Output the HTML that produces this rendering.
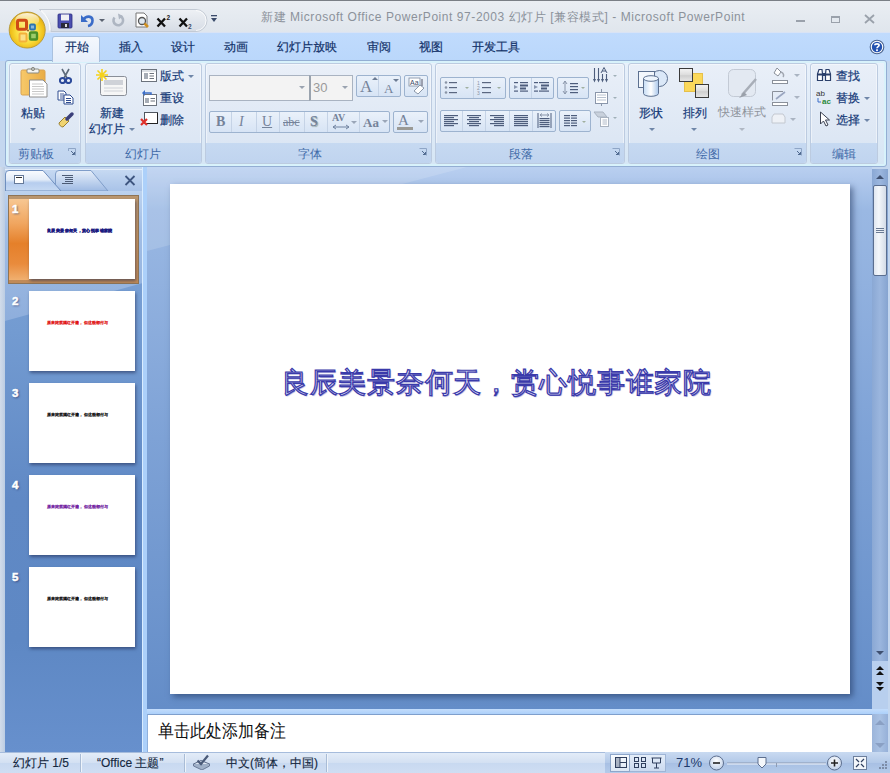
<!DOCTYPE html>
<html><head><meta charset="utf-8">
<style>
*{margin:0;padding:0;box-sizing:border-box}
html,body{width:890px;height:773px;overflow:hidden;background:#c4d7ef}
body{position:relative;font-family:"Liberation Sans",sans-serif;font-size:12px;color:#15428b}
.a{position:absolute}
.t{position:absolute;white-space:nowrap;line-height:1}
/* title bar */
#title{left:0;top:0;width:890px;height:32px;background:linear-gradient(#eaeef3,#e0e6ed);border-top:1px solid #7a7f86}
#tabs{left:0;top:32px;width:890px;height:29px;border-top:1px solid #d9e3f5;background:linear-gradient(#c0dbfd,#bad7fb)}
#ribbon{left:5px;top:60px;width:882px;height:107px;border:1px solid #93aed3;border-radius:3px;box-shadow:inset 0 0 0 2px #d8f2fb;background:linear-gradient(#e8f1fb,#dde9f6 70%,#d5e6f5)}
.grp{position:absolute;top:63px;height:101px;border:1px solid #bccbe0;border-radius:3px;box-shadow:inset 0 0 0 1px rgba(255,255,255,.45);background:linear-gradient(#e9eff8,#dde7f4 75%,#d6e3f4)}
.grp .lab{position:absolute;left:0;right:0;bottom:0;height:20px;background:linear-gradient(#c6d9f1,#c0d4ef);text-align:center;line-height:20px;color:#3e6aaa;border-radius:0 0 2px 2px}
.btnbox{position:absolute;border:1px solid #9db3cf;border-radius:2px;background:linear-gradient(#eaf1fa,#d7e4f5)}
.dd{position:absolute;width:0;height:0;border-left:3px solid transparent;border-right:3px solid transparent;border-top:3px solid #6f86a8}
#left{left:0;top:167px;width:143px;height:586px;background:linear-gradient(170deg,#a9c4e8 0%,#7ea3d7 12%,#6893cf 40%,#5f8ac8 100%)}
#split{left:142px;top:167px;width:5px;height:586px;background:linear-gradient(90deg,#d9ecff 0,#d9ecff 1px,#acd0fa 1px)}
#stage{left:147px;top:167px;width:725px;height:542px;background:linear-gradient(#b9cff0,#9ab8e3 8%,#7ea2d6 50%,#648dc8)}
#slide{left:170px;top:184px;width:680px;height:510px;background:#fff;box-shadow:3px 3px 6px rgba(30,50,90,.55)}
#notes{left:147px;top:714px;width:725px;height:39px;background:#fff;border-top:1px solid #7f9fcc;border-left:1px solid #8fb0dc}
#status{left:0;top:752px;width:890px;height:21px;border-top:1px solid #a6bcdc;background:linear-gradient(#e3ecf8,#d3e0f2 50%,#c8d9f0 51%,#cfdef3)}
.tab{font-size:12px;color:#14336a;-webkit-text-stroke:0.2px #14336a}
.rb{font-size:12px;color:#163a78;margin-top:1px;-webkit-text-stroke:0.2px #163a78}
.lab2{font-size:12px;color:#3f6aa8;margin-top:1px;margin-left:-1px}
.ser{font-family:"Liberation Serif",serif;color:#75839a}
.sep{top:112px;width:1px;height:20px;background:#c5d3e6}
.sep2{top:111px;width:1px;height:20px;background:#c5d3e6}
.thumb{left:29px;width:106px;height:80px;background:#fff;box-shadow:1px 2px 3px rgba(30,40,80,.55)}
.num{left:11px;font-size:11.5px;font-weight:bold;color:#fff;-webkit-text-stroke:0.5px #fff;text-shadow:1px 1px 2px rgba(30,40,90,.7);margin-left:1px;margin-top:1px}
.st{font-size:12px;color:#15283f;-webkit-text-stroke:0.15px #15283f}
.stsep{top:754px;width:1px;height:18px;background:#a9bcd6;box-shadow:1px 0 0 #eef4fb}
.thtx{left:47px;font-size:4.4px;letter-spacing:0.38px;-webkit-text-stroke:0.35px currentColor}
</style></head><body>
<div id="title" class="a"></div>
<div id="tabs" class="a"></div>
<div id="ribbon" class="a"></div>
<!-- TITLE -->
<div class="t" id="ttl" style="left:261px;top:11px;font-size:12px;letter-spacing:0.56px;color:#8c929b">新建 Microsoft Office PowerPoint 97-2003 幻灯片 [兼容模式] - Microsoft PowerPoint</div>
<!-- office button -->
<svg class="a" style="left:7px;top:10px" width="40" height="40" viewBox="0 0 40 40">
<defs><radialGradient id="ob" cx=".5" cy=".55" r=".55"><stop offset="0" stop-color="#fff3a0"/><stop offset=".55" stop-color="#f9dc3c"/><stop offset=".85" stop-color="#efbd18"/><stop offset="1" stop-color="#d9a418"/></radialGradient>
<linearGradient id="obh" x1="0" y1="0" x2="0" y2="1"><stop offset="0" stop-color="#fff" stop-opacity=".85"/><stop offset="1" stop-color="#fff" stop-opacity="0"/></linearGradient></defs>
<circle cx="20.2" cy="20" r="18" fill="url(#ob)" stroke="#b99c3c" stroke-width="1"/>
<ellipse cx="20.2" cy="10" rx="12" ry="7" fill="url(#obh)"/>
<rect x="10.5" y="10.3" width="9" height="9" rx="1.5" fill="none" stroke="#cf4a16" stroke-width="3"/>
<rect x="23" y="14.5" width="5" height="5" rx="1" fill="#8ab8d8" stroke="#2b74b0" stroke-width="1.8"/>
<rect x="23" y="22.5" width="7" height="7" rx="1" fill="#9ccc6a" stroke="#4a9028" stroke-width="2.4"/>
<rect x="12.5" y="23.5" width="7" height="8" rx="1" fill="#fbe088" stroke="#f3b13a" stroke-width="2"/>
<circle cx="21" cy="20.5" r="1" fill="#8a5a20"/>
</svg>
<!-- QAT -->
<svg class="a" style="left:0;top:0" width="220" height="34" viewBox="0 0 220 34"><defs><linearGradient id="qat" x1="0" y1="0" x2="0" y2="1"><stop offset="0" stop-color="#eef1f5"/><stop offset="1" stop-color="#d6dce5"/></linearGradient></defs>
<path d="M39.5 9.5 H196 A11 11 0 0 1 196 31.5 H51 A24 24 0 0 0 39.5 9.5z" fill="url(#qat)" stroke="#c3cad4" stroke-width="1"/>
<path d="M41 10.5 A24 24 0 0 1 50 30.5" fill="none" stroke="#ffffff" stroke-width="1.5" opacity=".9"/>
<path d="M196 10.5 A10 10 0 0 1 196 30.5" fill="none" stroke="#ffffff" stroke-width="1" opacity=".8"/></svg>
<svg class="a" style="left:57px;top:13px" width="16" height="16" viewBox="0 0 16 16"><rect x="1" y="1" width="14" height="14" rx="1" fill="#4b4fb0" stroke="#2c2f80" stroke-width=".8"/><rect x="4" y="1.5" width="8" height="6" fill="#f0f0f4"/><rect x="4" y="10" width="8" height="5" fill="#2a2a3a"/><rect x="8" y="11" width="2" height="3" fill="#ddd"/></svg>
<svg class="a" style="left:80px;top:13px" width="15" height="15" viewBox="0 0 15 15"><path d="M1 2 L1 9 L8 9z" fill="#3a6cc8"/><path d="M3.5 6.5 C6 2.5,12.5 2.5,12.5 7.5 C12.5 10.5,10.5 12.5,8 13" fill="none" stroke="#3a6cc8" stroke-width="2.6"/></svg>
<div class="dd" style="left:99px;top:19px;border-top-color:#5a6270"></div>
<svg class="a" style="left:111px;top:13px" width="14" height="14" viewBox="0 0 14 14"><path d="M9.5 3.2 A4.8 4.8 0 1 1 3.5 4.5" fill="none" stroke="#aeb6c2" stroke-width="2.6"/><path d="M7 0.5 L12 3 L8 6.5z" fill="#aeb6c2"/></svg>
<svg class="a" style="left:134px;top:12px" width="16" height="17" viewBox="0 0 16 17"><path d="M2 1 H10 L13 4 V15 H2z" fill="#fff" stroke="#777" stroke-width="1"/><circle cx="8" cy="9" r="3.5" fill="#dfe8f0" stroke="#555" stroke-width="1.3"/><path d="M10.5 11.5 L14 15" stroke="#d09020" stroke-width="2.5"/></svg>
<svg class="a" style="left:156px;top:14px" width="16" height="14" viewBox="0 0 16 14"><path d="M1.5 4.5 L9 12.5 M9 4.5 L1.5 12.5" stroke="#111" stroke-width="2.3"/><text x="10.5" y="6" font-size="6.5" font-weight="bold" font-family="Liberation Sans" fill="#222">2</text></svg>
<svg class="a" style="left:178px;top:14px" width="16" height="16" viewBox="0 0 16 16"><path d="M1.5 4.5 L9 12.5 M9 4.5 L1.5 12.5" stroke="#111" stroke-width="2.3"/><text x="10" y="15" font-size="6.5" font-weight="bold" font-family="Liberation Sans" fill="#3a4a6a">2</text></svg>
<svg class="a" style="left:210px;top:14px" width="8" height="9" viewBox="0 0 8 9"><rect x="1" y="1" width="6" height="1.3" fill="#3a4a6a"/><path d="M1 4 H7 L4 8z" fill="#3a4a6a"/></svg>
<!-- window buttons -->
<div class="a" style="left:796px;top:20px;width:9px;height:2px;background:#9aa1ab"></div>
<div class="a" style="left:831px;top:16px;width:9px;height:7px;border:1px solid #9aa1ab;border-top-width:2px"></div>
<svg class="a" style="left:864px;top:14px" width="11" height="10" viewBox="0 0 11 10"><path d="M1 1 L10 9 M10 1 L1 9" stroke="#9aa1ab" stroke-width="1.8"/></svg>
<!-- TABS -->
<div class="a" style="left:52px;top:36px;width:48px;height:26px;border:1px solid #a9c1df;border-bottom:none;border-radius:3px 3px 0 0;background:linear-gradient(#f4f8fd,#e6eefa)"></div>
<div class="t tab" style="left:65px;top:41px">开始</div>
<div class="t tab" style="left:119px;top:41px">插入</div>
<div class="t tab" style="left:171px;top:41px">设计</div>
<div class="t tab" style="left:224px;top:41px">动画</div>
<div class="t tab" style="left:277px;top:41px">幻灯片放映</div>
<div class="t tab" style="left:367px;top:41px">审阅</div>
<div class="t tab" style="left:419px;top:41px">视图</div>
<div class="t tab" style="left:472px;top:41px">开发工具</div>
<svg class="a" style="left:869px;top:39px" width="16" height="16" viewBox="0 0 16 16"><circle cx="8" cy="8" r="6.8" fill="#fff" stroke="#4a6490" stroke-width="1.1"/><circle cx="8" cy="8" r="5.2" fill="#2352b0"/><path d="M5.9 6.2 C5.9 4.3,10.1 4.3,10.1 6.2 C10.1 7.6,8 7.6,8 9.3" fill="none" stroke="#fff" stroke-width="1.7"/><rect x="7.1" y="10.3" width="1.8" height="1.8" fill="#fff"/></svg>


<div class="grp" style="left:9px;width:72px"><div class="lab"></div></div>
<div class="grp" style="left:85px;width:117px"><div class="lab"></div></div>
<div class="grp" style="left:205px;width:227px"><div class="lab"></div></div>
<div class="grp" style="left:435px;width:190px"><div class="lab"></div></div>
<div class="grp" style="left:628px;width:179px"><div class="lab"></div></div>
<div class="grp" style="left:810px;width:68px"><div class="lab"></div></div>


<!-- CLIPBOARD -->
<svg class="a" style="left:20px;top:67px" width="28" height="31" viewBox="0 0 28 31">
<defs><linearGradient id="cb" x1="0" x2="1"><stop offset="0" stop-color="#f7c96a"/><stop offset="1" stop-color="#e9ac45"/></linearGradient></defs>
<rect x="1" y="3" width="24" height="25" rx="1.5" fill="url(#cb)" stroke="#d9a250" stroke-width="1"/>
<rect x="7" y="2" width="12" height="4" rx="1" fill="#f4f4f0" stroke="#8a8a80" stroke-width="1"/>
<circle cx="13" cy="2" r="1.6" fill="none" stroke="#8a8a80"/>
<path d="M9.5 13 H23 L27 17 V30 H9.5z" fill="#fff" stroke="#8d8d8d" stroke-width="1"/>
<path d="M12 17H23 M12 19.5H24 M12 22H24 M12 24.5H24 M12 27H24" stroke="#c8c8c8" stroke-width="1"/>
</svg>
<div class="t rb" style="left:21px;top:106px">粘贴</div>
<div class="dd" style="left:30px;top:128px"></div>
<svg class="a" style="left:59px;top:68px" width="13" height="16" viewBox="0 0 13 16"><path d="M3 1 L8 10 M10 1 L5 10" stroke="#5d6a7a" stroke-width="1.6"/><circle cx="3.5" cy="12.5" r="2.6" fill="none" stroke="#2c4a9a" stroke-width="2"/><circle cx="9.5" cy="12.5" r="2.6" fill="none" stroke="#2c4a9a" stroke-width="2"/></svg>
<svg class="a" style="left:57px;top:90px" width="17" height="15" viewBox="0 0 17 15"><path d="M1 1H7L9 3V10H1z" fill="#fff" stroke="#2f4c90"/><path d="M3 4H7M3 6H7M3 8H7" stroke="#2f4c90" stroke-width=".9"/><path d="M7 5H13L16 8V14H7z" fill="#fff" stroke="#2f4c90"/><path d="M9 8.5H14M9 10.5H14M9 12.5H14" stroke="#2f4c90" stroke-width="1"/></svg>
<svg class="a" style="left:57px;top:111px" width="18" height="17" viewBox="0 0 18 17"><path d="M2 12 L8 6 L12 10 L6 16 C4 16,2 14,2 12z" fill="#f0d470" stroke="#9a8030" stroke-width="1"/><path d="M10 8 L15 3" stroke="#3a3f7a" stroke-width="3.5" stroke-linecap="round"/></svg>
<div class="t lab2" style="left:19px;top:147px">剪贴板</div>
<svg class="a launch" style="left:68px;top:148px" width="8" height="8" viewBox="0 0 8 8"><path d="M0.5 0.5H7.5V7.5" fill="none" stroke="#8ea5c6"/><path d="M0.5 0.5V3 M0.5 0.5H3" stroke="#8ea5c6"/><path d="M3 3L6.5 6.5M6.5 4V6.5H4" fill="none" stroke="#506a90"/></svg>

<!-- SLIDES -->
<svg class="a" style="left:95px;top:68px" width="33" height="29" viewBox="0 0 33 29">
<rect x="5.5" y="8.5" width="26" height="19" rx="2" fill="#f6f6f6" stroke="#8a8f98"/>
<rect x="9" y="12" width="19" height="5" fill="#cfd2d8"/>
<path d="M9 20H28 M9 23H28" stroke="#cfd2d8"/>
<path d="M7 1 V13 M1 7 H13 M2.5 2.5 L11.5 11.5 M11.5 2.5 L2.5 11.5" stroke="#f5d21a" stroke-width="1.6"/>
</svg>
<div class="t rb" style="left:100px;top:106px">新建</div>
<div class="t rb" style="left:89px;top:122px">幻灯片</div>
<div class="dd" style="left:129px;top:128px"></div>
<svg class="a" style="left:141px;top:69px" width="16" height="13" viewBox="0 0 16 13"><rect x="0.5" y="0.5" width="15" height="12" fill="#fff" stroke="#6c737d"/><rect x="3" y="4" width="4" height="6" fill="#a7adb6"/><path d="M8.5 4.5H13M8.5 7H13M8.5 9.5H13" stroke="#6c737d"/><rect x="1" y="1" width="14" height="2" fill="#dde1e6"/></svg>
<div class="t rb" style="left:160px;top:69px">版式</div>
<div class="dd" style="left:188px;top:75px"></div>
<svg class="a" style="left:141px;top:89px" width="16" height="17" viewBox="0 0 16 17"><rect x="2.5" y="5.5" width="13" height="11" fill="#fff" stroke="#6c737d"/><rect x="4" y="9" width="4" height="5" fill="#a7adb6"/><path d="M9.5 9.5H14M9.5 12H14" stroke="#6c737d"/><path d="M1 4 L4 1 L4 7z" fill="#3d6fc8"/><path d="M4 4 H10 V6" fill="none" stroke="#3d6fc8" stroke-width="1.5"/></svg>
<div class="t rb" style="left:160px;top:91px">重设</div>
<svg class="a" style="left:140px;top:112px" width="18" height="15" viewBox="0 0 18 15"><rect x="4.5" y="0.5" width="13" height="11" fill="#fff" stroke="#50565f"/><path d="M6 11.5H17.5V1" fill="none" stroke="#222" stroke-width="1"/><path d="M1 7 L7 13 M7 7 L1 13" stroke="#e0302a" stroke-width="2.2"/></svg>
<div class="t rb" style="left:160px;top:113px">删除</div>
<div class="t lab2" style="left:126px;top:147px">幻灯片</div>

<!-- FONT -->
<div class="a" style="left:209px;top:75px;width:101px;height:26px;border:1px solid #a9b3c1;background:#f3f3f3"></div>
<div class="dd" style="left:299px;top:86px;border-top-color:#9aa3b0"></div>
<div class="a" style="left:309px;top:75px;width:44px;height:26px;border:1px solid #a9b3c1;border-left:2px solid #9aa3ae;background:#f3f3f3"></div>
<div class="t" style="left:313px;top:81px;font-size:13px;color:#9a9a9a">30</div>
<div class="dd" style="left:342px;top:86px;border-top-color:#9aa3b0"></div>
<div class="btnbox" style="left:356px;top:75px;width:45px;height:22px"></div>
<div class="a" style="left:378px;top:76px;width:1px;height:20px;background:#c5d3e6"></div>
<div class="t ser" style="left:360px;top:78px;font-size:17px">A</div>
<div class="a" style="left:372px;top:77px;width:0;height:0;border-left:3px solid transparent;border-right:3px solid transparent;border-bottom:3px solid #6d7c94"></div>
<div class="t ser" style="left:384px;top:82px;font-size:13px">A</div>
<div class="dd" style="left:393px;top:79px;border-top-color:#6d7c94"></div>
<div class="btnbox" style="left:404px;top:75px;width:24px;height:22px"></div>
<svg class="a" style="left:407px;top:77px" width="19" height="18" viewBox="0 0 19 18"><rect x="2" y="1" width="11" height="8" fill="#fff" stroke="#7d8aa0" stroke-width=".8"/><text x="3" y="8" font-size="7" font-family="Liberation Sans" fill="#3a4a6a">Aa</text><path d="M7 14 L13 8 L17 11 L11 17z" fill="#fff" stroke="#8a97aa"/><path d="M15 2V9" stroke="#556" stroke-width="1"/></svg>

<div class="btnbox" style="left:209px;top:111px;width:181px;height:22px"></div>
<div class="a sep" style="left:231px"></div><div class="a sep" style="left:256px"></div><div class="a sep" style="left:279px"></div><div class="a sep" style="left:304px"></div><div class="a sep" style="left:327px"></div><div class="a sep" style="left:359px"></div>
<div class="t ser" style="left:216px;top:115px;font-size:14px;font-weight:bold">B</div>
<div class="t ser" style="left:239px;top:115px;font-size:14px;font-style:italic">I</div>
<div class="t ser" style="left:262px;top:115px;font-size:14px;text-decoration:underline">U</div>
<div class="t ser" style="left:283px;top:116px;font-size:12px;text-decoration:line-through">abc</div>
<div class="t ser" style="left:310px;top:115px;font-size:14px;font-weight:bold;text-shadow:1px 1px 1px #9aa">S</div>
<div class="t ser" style="left:332px;top:113px;font-size:10px;font-weight:bold">AV</div>
<svg class="a" style="left:332px;top:124px" width="18" height="6" viewBox="0 0 18 6"><path d="M1 3H17 M1 3L4 1 M1 3L4 5 M17 3L14 1 M17 3L14 5" stroke="#7083a0" fill="none"/></svg>
<div class="dd" style="left:351px;top:121px;border-top-color:#9aa6b8"></div>
<div class="t ser" style="left:363px;top:116px;font-size:13px;font-weight:bold">Aa</div>
<div class="dd" style="left:382px;top:120px;border-top-color:#9aa6b8"></div>
<div class="btnbox" style="left:393px;top:111px;width:35px;height:22px"></div>
<div class="t ser" style="left:398px;top:113px;font-size:15px">A</div>
<div class="a" style="left:397px;top:127px;width:16px;height:3px;background:#9a9a96"></div>
<div class="dd" style="left:418px;top:120px;border-top-color:#9aa6b8"></div>
<div class="t lab2" style="left:299px;top:147px">字体</div>
<svg class="a launch" style="left:419px;top:148px" width="8" height="8" viewBox="0 0 8 8"><path d="M0.5 0.5H7.5V7.5" fill="none" stroke="#8ea5c6"/><path d="M3 3L6.5 6.5M6.5 4V6.5H4" fill="none" stroke="#506a90"/></svg>

<!-- PARAGRAPH -->
<div class="btnbox" style="left:440px;top:77px;width:66px;height:22px"></div>
<div class="a" style="left:473px;top:78px;width:1px;height:20px;background:#c5d3e6"></div>
<svg class="a" style="left:444px;top:80px" width="60" height="15" viewBox="0 0 60 15">
<circle cx="2" cy="2.5" r="1.3" fill="#8a94a6"/><circle cx="2" cy="7.5" r="1.3" fill="#8a94a6"/><circle cx="2" cy="12.5" r="1.3" fill="#8a94a6"/>
<rect x="5" y="2" width="8" height="1.2" fill="#5a6780"/><rect x="5" y="7" width="8" height="1.2" fill="#5a6780"/><rect x="5" y="12" width="8" height="1.2" fill="#5a6780"/>
<path d="M21 7H25L23 9z" fill="#a0b0a0"/>
<text x="33" y="5" font-size="5" fill="#8a94a6" font-family="Liberation Sans">1</text><text x="33" y="10" font-size="5" fill="#8a94a6" font-family="Liberation Sans">2</text><text x="33" y="15" font-size="5" fill="#8a94a6" font-family="Liberation Sans">3</text>
<rect x="38" y="2" width="9" height="1.2" fill="#5a6780"/><rect x="38" y="7" width="9" height="1.2" fill="#5a6780"/><rect x="38" y="12" width="9" height="1.2" fill="#5a6780"/>
<path d="M53 7H57L55 9z" fill="#a0b0a0"/>
</svg>
<div class="btnbox" style="left:509px;top:77px;width:45px;height:22px"></div>
<div class="a" style="left:531px;top:78px;width:1px;height:20px;background:#c5d3e6"></div>
<svg class="a" style="left:513px;top:80px" width="38" height="15" viewBox="0 0 38 15">
<rect x="1" y="2" width="4" height="1.2" fill="#4d5d7c"/><rect x="7" y="2" width="8" height="1.2" fill="#4d5d7c"/><rect x="7" y="4.5" width="8" height="2" fill="#4d5d7c"/><rect x="7" y="7.5" width="6" height="2" fill="#4d5d7c"/><rect x="1" y="10.5" width="4" height="1.2" fill="#4d5d7c"/><rect x="7" y="10.5" width="8" height="1.2" fill="#4d5d7c"/><path d="M5 7L1 5V9z" fill="#8896b0"/>
<rect x="21" y="2" width="4" height="1.2" fill="#4d5d7c"/><rect x="26" y="2" width="10" height="1.2" fill="#4d5d7c"/><rect x="28" y="4.5" width="8" height="2" fill="#4d5d7c"/><rect x="28" y="7.5" width="6" height="2" fill="#4d5d7c"/><rect x="21" y="10.5" width="4" height="1.2" fill="#4d5d7c"/><rect x="26" y="10.5" width="10" height="1.2" fill="#4d5d7c"/><path d="M21 5L25 7L21 9z" fill="#8896b0"/>
</svg>
<div class="btnbox" style="left:557px;top:77px;width:32px;height:22px"></div>
<svg class="a" style="left:561px;top:80px" width="26" height="15" viewBox="0 0 26 15"><path d="M4 1V14 M4 1L2 4M4 1L6 4 M4 14L2 11M4 14L6 11" stroke="#8a96aa" fill="none"/><rect x="9" y="3" width="8" height="1.2" fill="#4d5d7c"/><rect x="9" y="6" width="8" height="1.2" fill="#4d5d7c"/><rect x="9" y="9" width="8" height="1.2" fill="#4d5d7c"/><rect x="9" y="12" width="8" height="1.2" fill="#4d5d7c"/><path d="M20 7H24L22 9z" fill="#a0b0a0"/></svg>
<svg class="a" style="left:593px;top:67px" width="26" height="17" viewBox="0 0 26 17"><path d="M1.5 1V13 M5.5 1V13 M9.5 7V13 M13.5 7V13" stroke="#4d5d7c" stroke-width="1.1"/><path d="M0 12L1.5 15.5L3 12z M4 12L5.5 15.5L7 12z M8 12L9.5 15.5L11 12z M12 12L13.5 15.5L15 12z" fill="#4d5d7c"/><path d="M8 6 L11 0.5 L14 6 M9 4H13" fill="none" stroke="#4d5d7c" stroke-width="1"/><path d="M20 8H24L22 10z" fill="#a0b0b8"/></svg>
<svg class="a" style="left:593px;top:89px" width="26" height="17" viewBox="0 0 26 17"><rect x="2.5" y="3.5" width="12" height="11" fill="#fff" stroke="#8a96aa"/><path d="M4 6H13M4 8.5H13M4 11H13" stroke="#b8c2d0"/><path d="M8.5 0V3 M8.5 14.5V17" stroke="#8a96aa"/><path d="M20 8H24L22 10z" fill="#a0b0b8"/></svg>
<svg class="a" style="left:593px;top:111px" width="26" height="17" viewBox="0 0 26 17"><path d="M1 1H10L14 6H5z" fill="#c9d1dc" stroke="#a9b3c0"/><rect x="7.5" y="6.5" width="8" height="9" fill="#fff" stroke="#a9b3c0"/><path d="M9.5 9H14M9.5 11H14M9.5 13H14" stroke="#b0bac8"/><path d="M20 6H24L22 8z" fill="#a0b0b8"/></svg>

<div class="btnbox" style="left:440px;top:110px;width:116px;height:22px"></div>
<div class="a sep2" style="left:462px"></div><div class="a sep2" style="left:485px"></div><div class="a sep2" style="left:509px"></div><div class="a sep2" style="left:532px"></div>
<svg class="a" style="left:444px;top:115px" width="14" height="12"><rect x="0" y="0" width="14" height="1.2" fill="#4d5d7c"/><rect x="0" y="2" width="10" height="1.2" fill="#4d5d7c"/><rect x="0" y="4" width="14" height="1.2" fill="#4d5d7c"/><rect x="0" y="6" width="10" height="1.2" fill="#4d5d7c"/><rect x="0" y="8" width="14" height="1.2" fill="#4d5d7c"/><rect x="0" y="10" width="10" height="1.2" fill="#4d5d7c"/></svg>
<svg class="a" style="left:467px;top:115px" width="14" height="12"><rect x="0" y="0" width="14" height="1.2" fill="#4d5d7c"/><rect x="2" y="2" width="10" height="1.2" fill="#4d5d7c"/><rect x="0" y="4" width="14" height="1.2" fill="#4d5d7c"/><rect x="2" y="6" width="10" height="1.2" fill="#4d5d7c"/><rect x="0" y="8" width="14" height="1.2" fill="#4d5d7c"/><rect x="2" y="10" width="10" height="1.2" fill="#4d5d7c"/></svg>
<svg class="a" style="left:490px;top:115px" width="14" height="12"><rect x="0" y="0" width="14" height="1.2" fill="#4d5d7c"/><rect x="4" y="2" width="10" height="1.2" fill="#4d5d7c"/><rect x="0" y="4" width="14" height="1.2" fill="#4d5d7c"/><rect x="4" y="6" width="10" height="1.2" fill="#4d5d7c"/><rect x="0" y="8" width="14" height="1.2" fill="#4d5d7c"/><rect x="4" y="10" width="10" height="1.2" fill="#4d5d7c"/></svg>
<svg class="a" style="left:514px;top:115px" width="14" height="12"><rect x="0" y="0" width="14" height="1.2" fill="#4d5d7c"/><rect x="0" y="2" width="14" height="1.2" fill="#4d5d7c"/><rect x="0" y="4" width="14" height="1.2" fill="#4d5d7c"/><rect x="0" y="6" width="14" height="1.2" fill="#4d5d7c"/><rect x="0" y="8" width="14" height="1.2" fill="#4d5d7c"/><rect x="0" y="10" width="14" height="1.2" fill="#4d5d7c"/></svg>
<svg class="a" style="left:537px;top:112px" width="15" height="17" viewBox="0 0 15 17"><path d="M1 1V16 M14 1V16" stroke="#4d5d7c"/><path d="M3 3H12 M3 3L5 1.5M3 3L5 4.5M12 3L10 1.5M12 3L10 4.5" stroke="#8a96aa" fill="none"/><rect x="2.5" y="6" width="10" height="1.2" fill="#4d5d7c"/><rect x="2.5" y="8" width="10" height="1.2" fill="#4d5d7c"/><rect x="2.5" y="10" width="10" height="1.2" fill="#4d5d7c"/><rect x="2.5" y="12" width="10" height="1.2" fill="#4d5d7c"/><rect x="2.5" y="14" width="10" height="1.2" fill="#4d5d7c"/></svg>
<div class="btnbox" style="left:559px;top:110px;width:32px;height:22px"></div>
<svg class="a" style="left:563px;top:115px" width="26" height="12" viewBox="0 0 26 12"><rect x="1" y="0" width="6" height="1.2" fill="#4d5d7c"/><rect x="8" y="0" width="6" height="1.2" fill="#4d5d7c"/><rect x="1" y="2.5" width="6" height="1.2" fill="#4d5d7c"/><rect x="8" y="2.5" width="6" height="1.2" fill="#4d5d7c"/><rect x="1" y="5" width="6" height="1.2" fill="#4d5d7c"/><rect x="8" y="5" width="6" height="1.2" fill="#4d5d7c"/><rect x="1" y="7.5" width="6" height="1.2" fill="#4d5d7c"/><rect x="8" y="7.5" width="6" height="1.2" fill="#4d5d7c"/><rect x="1" y="10" width="6" height="1.2" fill="#4d5d7c"/><rect x="8" y="10" width="6" height="1.2" fill="#4d5d7c"/><path d="M19 6H23L21 8z" fill="#a0b0a0"/></svg>
<div class="t lab2" style="left:510px;top:147px">段落</div>
<svg class="a launch" style="left:612px;top:148px" width="8" height="8" viewBox="0 0 8 8"><path d="M0.5 0.5H7.5V7.5" fill="none" stroke="#8ea5c6"/><path d="M3 3L6.5 6.5M6.5 4V6.5H4" fill="none" stroke="#506a90"/></svg>

<!-- DRAWING -->
<svg class="a" style="left:636px;top:68px" width="34" height="31" viewBox="0 0 34 31">
<defs><linearGradient id="cyl" x1="0" x2="1"><stop offset="0" stop-color="#c5dcf5"/><stop offset=".5" stop-color="#ffffff"/><stop offset="1" stop-color="#a9c6ea"/></linearGradient></defs>
<circle cx="23.5" cy="10.5" r="8" fill="#dbe8f8" stroke="#5c7090" stroke-width="1"/>
<rect x="2.5" y="3.5" width="16" height="16" fill="#f3f7fc" stroke="#5c7090" stroke-width="1"/>
<path d="M7.5 10.5 V25.5 A7.5 2.8 0 0 0 22.5 25.5 V10.5z" fill="url(#cyl)" stroke="#5c7090" stroke-width="1"/>
<ellipse cx="15" cy="10.5" rx="7.5" ry="2.8" fill="#eef5fd" stroke="#5c7090" stroke-width="1"/>
</svg>
<div class="t rb" style="left:639px;top:106px">形状</div>
<div class="dd" style="left:649px;top:128px"></div>
<svg class="a" style="left:678px;top:67px" width="33" height="32" viewBox="0 0 33 32">
<defs><linearGradient id="gsq" x1="0" y1="0" x2="0" y2="1"><stop offset="0" stop-color="#f4f4f4"/><stop offset=".5" stop-color="#dcdcdc"/><stop offset=".55" stop-color="#cfcfcf"/><stop offset="1" stop-color="#e8e8e8"/></linearGradient></defs>
<rect x="6.5" y="6.5" width="18" height="18" fill="#fbd85a" stroke="#e6c04a"/>
<rect x="1.5" y="1.5" width="13" height="13" fill="url(#gsq)" stroke="#3a3a3a"/>
<rect x="17.5" y="17.5" width="13" height="13" fill="url(#gsq)" stroke="#3a3a3a"/>
</svg>
<div class="t rb" style="left:683px;top:106px">排列</div>
<div class="dd" style="left:691px;top:128px"></div>
<svg class="a" style="left:727px;top:68px" width="32" height="31" viewBox="0 0 32 31">
<rect x="1.5" y="1.5" width="27" height="27" rx="5" fill="#e3e9f2" stroke="#c3cad5"/>
<path d="M29 11 L15 27" stroke="#a8aeb8" stroke-width="2.5"/><path d="M17 24 L12 30 L20 27z" fill="#9aa0aa"/>
</svg>
<div class="t" style="left:718px;top:106px;color:#8f949c">快速样式</div>
<div class="dd" style="left:739px;top:128px;border-top-color:#b0b8c4"></div>
<svg class="a" style="left:771px;top:67px" width="18" height="17" viewBox="0 0 18 17"><path d="M6 1 L10 5 L7 9 L3 6z" fill="#fff" stroke="#8a909a"/><path d="M10 5 C13 6,13 9,12 10" stroke="#a0a6b0" fill="none" stroke-width="1.5"/><rect x="1.5" y="13.5" width="15" height="3" fill="#fff" stroke="#8a909a"/></svg>
<div class="dd" style="left:794px;top:74px;border-top-color:#aab4c2"></div>
<svg class="a" style="left:771px;top:90px" width="18" height="17" viewBox="0 0 18 17"><path d="M1.5 10.5 V1.5 H12" fill="none" stroke="#8a909a"/><path d="M5 9 L14 2" stroke="#9aa6c0" stroke-width="1.6"/><rect x="1.5" y="12.5" width="15" height="3" fill="#fff" stroke="#8a909a"/></svg>
<div class="dd" style="left:794px;top:96px;border-top-color:#aab4c2"></div>
<svg class="a" style="left:771px;top:112px" width="16" height="13" viewBox="0 0 16 13"><path d="M3 2 H12 L14 5 V11 H1 V5z" fill="#eef1f6" stroke="#c3c8d0"/></svg>
<div class="dd" style="left:790px;top:118px;border-top-color:#aab4c2"></div>
<div class="t lab2" style="left:697px;top:147px">绘图</div>
<svg class="a launch" style="left:794px;top:148px" width="8" height="8" viewBox="0 0 8 8"><path d="M0.5 0.5H7.5V7.5" fill="none" stroke="#8ea5c6"/><path d="M3 3L6.5 6.5M6.5 4V6.5H4" fill="none" stroke="#506a90"/></svg>

<!-- EDITING -->
<svg class="a" style="left:816px;top:68px" width="16" height="14" viewBox="0 0 16 14"><path d="M1.5 6 L3 1.5 H6 L6.5 6 V12.5 H1.5z M9.5 6 L10 1.5 H13 L14.5 6 V12.5 H9.5z" fill="#fff" stroke="#2b3f6a" stroke-width="1.2"/><rect x="6" y="5" width="4" height="3" fill="#2b3f6a"/><rect x="1" y="5.5" width="6" height="2" fill="#2b3f6a"/><rect x="9" y="5.5" width="6" height="2" fill="#2b3f6a"/></svg>
<div class="t rb" style="left:836px;top:69px">查找</div>
<svg class="a" style="left:816px;top:89px" width="17" height="16" viewBox="0 0 17 16"><text x="0" y="7" font-size="8" font-family="Liberation Sans" fill="#333">ab</text><text x="6" y="15" font-size="8" font-family="Liberation Sans" font-weight="bold" fill="#2a8a3a">ac</text><path d="M2 9 V13 H5" fill="none" stroke="#3d6fc8"/></svg>
<div class="t rb" style="left:836px;top:91px">替换</div>
<div class="dd" style="left:864px;top:97px"></div>
<svg class="a" style="left:819px;top:111px" width="12" height="16" viewBox="0 0 12 16"><path d="M1.5 1 V13 L4.5 10 L7 15 L9 14 L6.5 9 L10.5 9z" fill="#fff" stroke="#3a4050" stroke-width="1"/></svg>
<div class="t rb" style="left:836px;top:113px">选择</div>
<div class="dd" style="left:864px;top:119px"></div>
<div class="t lab2" style="left:833px;top:147px">编辑</div>

<!-- LEFT PANE -->
<div class="a" style="left:0;top:167px;width:5px;height:586px;background:linear-gradient(90deg,#d2dcea,#bccde3)"></div>
<div class="a" style="left:5px;top:169px;width:137px;height:22px;background:linear-gradient(#c6d9f2,#a9c3e8);border-top:1px solid #e4eefa"></div>
<svg class="a" style="left:5px;top:169px" width="137" height="23" viewBox="0 0 137 23">
<defs><linearGradient id="tab1" x1="0" y1="0" x2="0" y2="1"><stop offset="0" stop-color="#fafcff"/><stop offset=".45" stop-color="#e3ecf8"/><stop offset=".6" stop-color="#b6cdee"/><stop offset="1" stop-color="#c7daf3"/></linearGradient>
<linearGradient id="tab2" x1="0" y1="0" x2="0" y2="1"><stop offset="0" stop-color="#e6eef9"/><stop offset=".5" stop-color="#c3d5ef"/><stop offset="1" stop-color="#9ebae3"/></linearGradient></defs>
<path d="M50.5 22 V5 Q50.5 1.5 54 1.5 H86 L103 22z" fill="url(#tab2)" stroke="#7f9dc9"/>
<path d="M0.5 22 V5 Q0.5 1.5 4 1.5 H38 L56 22z" fill="url(#tab1)" stroke="#6f8fbf"/>
<rect x="9.5" y="6.5" width="9" height="8" fill="#fff" stroke="#667a99"/><rect x="11" y="8" width="6" height="1" fill="#333"/>
<path d="M57 6.5H68 M60 8.5H68 M60 10.5H68 M60 12.5H68 M57 14.5H68" stroke="#3e4d66" stroke-width="0.9"/>
<path d="M120.5 7 L129.5 16 M129.5 7 L120.5 16" stroke="#3e5680" stroke-width="1.8"/>
</svg>
<div class="a" style="left:5px;top:191px;width:137px;height:562px;background:linear-gradient(#80a4d7 0%,#739bd1 25%,#6089c5 55%,#5e88c4 80%,#6790cd 100%)"></div>
<div class="a" style="left:5px;top:191px;width:137px;height:130px;background:linear-gradient(#bcd2ef,#a2bee5 30%,#8eaedc 100%);clip-path:polygon(0 0,100% 0,100% 71%,0 100%)"></div>
<div class="a" style="left:8px;top:195px;width:131px;height:89px;border:1px solid #8f7455;background:linear-gradient(#b99670,#c9955e 50%,#c08a58)"></div>
<div class="a" style="left:9px;top:199px;width:20px;height:81px;background:linear-gradient(#f7c792 0%,#f0a660 30%,#e5802a 55%,#e98b3c 80%,#f0b070 100%)"></div>
<div class="a thumb" style="top:199px"></div><div class="t num" style="top:203px">1</div><div class="t thtx" style="top:229px;color:#1c1c80;font-weight:bold">良辰美景奈何天，赏心悦事谁家院</div><div class="a thumb" style="top:291px"></div><div class="t num" style="top:295px">2</div><div class="t thtx" style="top:321px;color:#e01010;font-weight:normal;letter-spacing:0.06px;-webkit-text-stroke:0.25px currentColor">原来姹紫嫣红开遍，似这般都付与</div><div class="a thumb" style="top:383px"></div><div class="t num" style="top:387px">3</div><div class="t thtx" style="top:413px;color:#111;font-weight:normal;letter-spacing:0.06px;-webkit-text-stroke:0.25px currentColor">原来姹紫嫣红开遍，似这般都付与</div><div class="a thumb" style="top:475px"></div><div class="t num" style="top:479px">4</div><div class="t thtx" style="top:505px;color:#7020a0;font-weight:normal;letter-spacing:0.06px;-webkit-text-stroke:0.25px currentColor">原来姹紫嫣红开遍，似这般都付与</div><div class="a thumb" style="top:567px"></div><div class="t num" style="top:571px">5</div><div class="t thtx" style="top:597px;color:#111;font-weight:normal;letter-spacing:0.06px;-webkit-text-stroke:0.25px currentColor">原来姹紫嫣红开遍，似这般都付与</div>

<div id="split" class="a"></div>
<div id="stage" class="a"></div>
<div class="a" style="left:147px;top:167px;width:320px;height:84px;background:rgba(255,255,255,.15);clip-path:polygon(0 0,100% 0,0 100%)"></div>
<div id="slide" class="a"></div>
<div id="notes" class="a"></div>
<div id="status" class="a"></div>

<!-- SLIDE TEXT -->
<div class="t" id="stitle" lang="zh-CN" style="left:281px;top:369px;font-family:'Liberation Serif',serif;font-size:28.3px;letter-spacing:0.72px;font-weight:normal;color:#dcdcf8;-webkit-text-stroke:1.2px #3a3aaa;text-shadow:1px 1px 1px #8c8cd0">良辰美景奈何天，赏心悦事谁家院</div>
<!-- V SCROLLBAR -->
<div class="a" style="left:872px;top:169px;width:16px;height:492px;background:linear-gradient(90deg,#8aa8d4,#9bb6de 50%,#86a4d0)"></div>
<div class="a" style="left:876px;top:175px;width:0;height:0;border-left:4px solid transparent;border-right:4px solid transparent;border-bottom:4px solid #3f5070"></div>
<div class="a" style="left:873px;top:185px;width:14px;height:91px;border:1px solid #5a6e90;border-radius:2px;background:linear-gradient(90deg,#dfe6f0,#f4f7fb 40%,#d3dbe7)"></div>
<div class="a" style="left:876px;top:228px;width:8px;height:5px;border-top:1px solid #6a7a94;border-bottom:1px solid #6a7a94"></div>
<div class="a" style="left:876px;top:230px;width:8px;height:1px;background:#6a7a94"></div>
<div class="a" style="left:876px;top:651px;width:0;height:0;border-left:4px solid transparent;border-right:4px solid transparent;border-top:4px solid #3f5070"></div>
<div class="a" style="left:872px;top:661px;width:16px;height:48px;background:#b8cfee"></div>
<svg class="a" style="left:874px;top:665px" width="12" height="27" viewBox="0 0 12 27"><path d="M2 5L6 1L10 5z M2 10L6 6L10 10z M2 17L6 21L10 17z M2 22L6 26L10 22z" fill="#111"/></svg>
<!-- NOTES -->
<div class="a" style="left:147px;top:709px;width:741px;height:5px;background:linear-gradient(#c3dcfb,#acd0fa)"></div>
<div class="t" style="left:158px;top:722px;font-size:16px;color:#111;transform:scaleY(1.13);transform-origin:0 0">单击此处添加备注</div>
<div class="a" style="left:872px;top:714px;width:16px;height:38px;background:linear-gradient(90deg,#9cb5da,#a9c1e3 50%,#96b0d8)"></div>
<div class="a" style="left:875px;top:720px;width:0;height:0;border-left:5px solid transparent;border-right:5px solid transparent;border-bottom:5px solid #8aa0c4"></div>
<div class="a" style="left:875px;top:743px;width:0;height:0;border-left:5px solid transparent;border-right:5px solid transparent;border-top:5px solid #8aa0c4"></div>
<!-- STATUS -->
<div class="t st" style="left:13px;top:757px">幻灯片 1/5</div>
<div class="a stsep" style="left:80px"></div>
<div class="t st" style="left:97px;top:757px">“Office 主题”</div>
<div class="a stsep" style="left:184px"></div>
<svg class="a" style="left:192px;top:754px" width="20" height="16" viewBox="0 0 20 16"><path d="M1.5 10 L9 6.5 L17.5 10 L10 14.5z" fill="#dfe7f2" stroke="#5a6a88"/><path d="M1.5 10 V12 L10 16 L17.5 12 V10" fill="#9fb0c8" stroke="#5a6a88" stroke-width=".8"/><path d="M5.5 6.5 L9 10 L16 1.5" fill="none" stroke="#4a5a78" stroke-width="2.2"/></svg>
<div class="t st" style="left:226px;top:757px">中文(简体，中国)</div>
<div class="a stsep" style="left:326px"></div>
<div class="a" style="left:605px;top:752px;width:285px;height:21px;background:linear-gradient(#c9daf1,#b3c9e8 50%,#a7bfe3 51%,#b4cbea)"></div>
<div class="a" style="left:610px;top:754px;width:56px;height:18px;border:1px solid #9fb5d6;background:linear-gradient(#e4edf8,#cbdaf0)"></div>
<div class="a" style="left:610px;top:754px;width:20px;height:18px;border:1px solid #8da6ca;background:linear-gradient(#f8fbfe,#dce7f5)"></div>
<svg class="a" style="left:614px;top:756px" width="50" height="14" viewBox="0 0 50 14"><rect x="1.5" y="1.5" width="11" height="10" fill="none" stroke="#2f3f5e"/><rect x="2" y="2" width="4" height="9" fill="#2f3f5e" opacity=".35"/><path d="M6 1.5V11.5 M6 6.5H12.5" stroke="#2f3f5e"/><rect x="20.5" y="1.5" width="4" height="4" fill="none" stroke="#2f3f5e"/><rect x="27.5" y="1.5" width="4" height="4" fill="none" stroke="#2f3f5e"/><rect x="20.5" y="7.5" width="4" height="4" fill="none" stroke="#2f3f5e"/><rect x="27.5" y="7.5" width="4" height="4" fill="none" stroke="#2f3f5e"/><path d="M37.5 2H47.5 M38.5 2V7H46.5V2 M42.5 7V12 M40 12H45" fill="none" stroke="#2f3f5e"/></svg>
<div class="t st" style="left:676px;top:756px;font-size:13px;color:#1f3a6b;-webkit-text-stroke:0">71%</div>
<svg class="a" style="left:707px;top:754px" width="164" height="18" viewBox="0 0 164 18">
<defs><radialGradient id="zb" cx=".5" cy=".35" r=".6"><stop offset="0" stop-color="#ffffff"/><stop offset="1" stop-color="#c3d3ea"/></radialGradient></defs>
<circle cx="9.5" cy="9" r="7" fill="url(#zb)" stroke="#5d6f8f"/><path d="M6 9H13" stroke="#222" stroke-width="1.6"/>
<path d="M20 9H119" stroke="#8d9bb3"/><path d="M20 10H119" stroke="#eef3fa"/>
<path d="M69.5 9 V13" stroke="#8d9bb3"/>
<path d="M51 3.5 H59 V10 L55 14 L51 10z" fill="#f4f7fb" stroke="#5d6f8f"/>
<circle cx="127.5" cy="9" r="7" fill="url(#zb)" stroke="#5d6f8f"/><path d="M124 9H131 M127.5 5.5V12.5" stroke="#222" stroke-width="1.6"/>
<rect x="146.5" y="2.5" width="13" height="13" fill="#f4f7fb" stroke="#6d7f9c"/><path d="M149 5 L152 8 M157 5 L154 8 M149 13 L152 10 M157 13 L154 10" stroke="#2f3f5e" stroke-width="1.2"/>
</svg>
<svg class="a" style="left:876px;top:760px" width="12" height="12" viewBox="0 0 12 12"><g fill="#7d8da8"><rect x="9" y="1" width="2" height="2"/><rect x="6" y="4" width="2" height="2"/><rect x="9" y="4" width="2" height="2"/><rect x="3" y="7" width="2" height="2"/><rect x="6" y="7" width="2" height="2"/><rect x="9" y="7" width="2" height="2"/></g></svg>
</body></html>
